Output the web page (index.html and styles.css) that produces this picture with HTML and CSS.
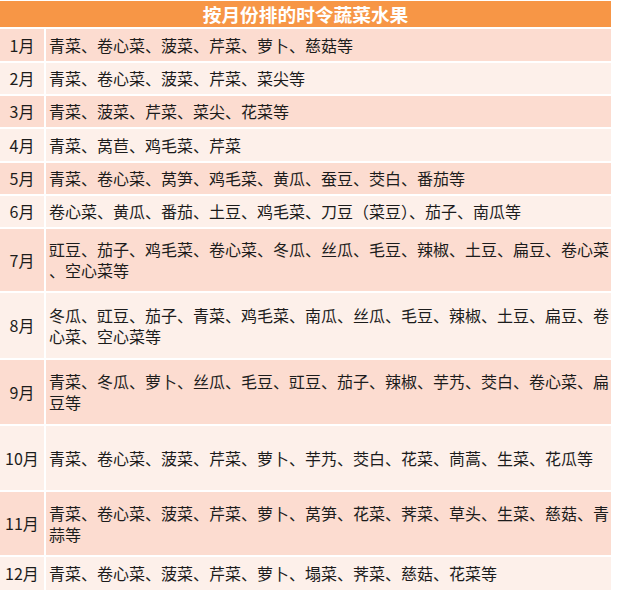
FILE: index.html
```html
<!DOCTYPE html>
<html lang="zh-CN">
<head>
<meta charset="utf-8">
<title>按月份排的时令蔬菜水果</title>
<link rel="stylesheet" href="styles.css">
</head>
<body>
<div class="table">
  <div class="head">按月份排的时令蔬菜水果</div>
  <div class="m dark">1月</div><div class="c dark">青菜、卷心菜、菠菜、芹菜、萝卜、慈菇等</div>
  <div class="m light">2月</div><div class="c light">青菜、卷心菜、菠菜、芹菜、菜尖等</div>
  <div class="m dark">3月</div><div class="c dark">青菜、菠菜、芹菜、菜尖、花菜等</div>
  <div class="m light">4月</div><div class="c light">青菜、莴苣、鸡毛菜、芹菜</div>
  <div class="m dark">5月</div><div class="c dark">青菜、卷心菜、莴笋、鸡毛菜、黄瓜、蚕豆、茭白、番茄等</div>
  <div class="m light">6月</div><div class="c light">卷心菜、黄瓜、番茄、土豆、鸡毛菜、刀豆（菜豆）、茄子、南瓜等</div>
  <div class="m dark">7月</div><div class="c dark">豇豆、茄子、鸡毛菜、卷心菜、冬瓜、丝瓜、毛豆、辣椒、土豆、扁豆、卷心菜、空心菜等</div>
  <div class="m light">8月</div><div class="c light">冬瓜、豇豆、茄子、青菜、鸡毛菜、南瓜、丝瓜、毛豆、辣椒、土豆、扁豆、卷心菜、空心菜等</div>
  <div class="m dark">9月</div><div class="c dark">青菜、冬瓜、萝卜、丝瓜、毛豆、豇豆、茄子、辣椒、芋艿、茭白、卷心菜、扁豆等</div>
  <div class="m light">10月</div><div class="c light">青菜、卷心菜、菠菜、芹菜、萝卜、芋艿、茭白、花菜、茼蒿、生菜、花瓜等</div>
  <div class="m dark">11月</div><div class="c dark">青菜、卷心菜、菠菜、芹菜、萝卜、莴笋、花菜、荠菜、草头、生菜、慈菇、青蒜等</div>
  <div class="m light">12月</div><div class="c light">青菜、卷心菜、菠菜、芹菜、萝卜、塌菜、荠菜、慈菇、花菜等</div>
</div>
</body>
</html>
```
FILE: styles.css
```css
html, body {
  margin: 0;
  padding: 0;
  background: #ffffff;
}
body {
  font-family: "Noto Sans CJK SC", "Noto Sans", sans-serif;
  color: #1c1c1c;
}
.table {
  display: grid;
  grid-template-columns: 44px 565px;
  grid-template-rows: 26px 32px 31px 31px 32px 31px 31px 62px 65px 64px 64px 63px 33px;
  gap: 2px;
  width: 611px;
  padding-top: 1px;
}
.head {
  grid-column: 1 / 3;
  background: #f79646;
  color: #ffffff;
  font-weight: bold;
  font-size: 18.7px;
  line-height: 26px;
  text-align: center;
}
.m, .c {
  display: flex;
  align-items: center;
  font-size: 16px;
  line-height: 21px;
}
.m {
  justify-content: center;
}
.c {
  padding-left: 3px;
  padding-right: 1px;
  line-break: anywhere;
}
.dark {
  background: #fcdcd0;
}
.light {
  background: #fdf0ea;
}
```
